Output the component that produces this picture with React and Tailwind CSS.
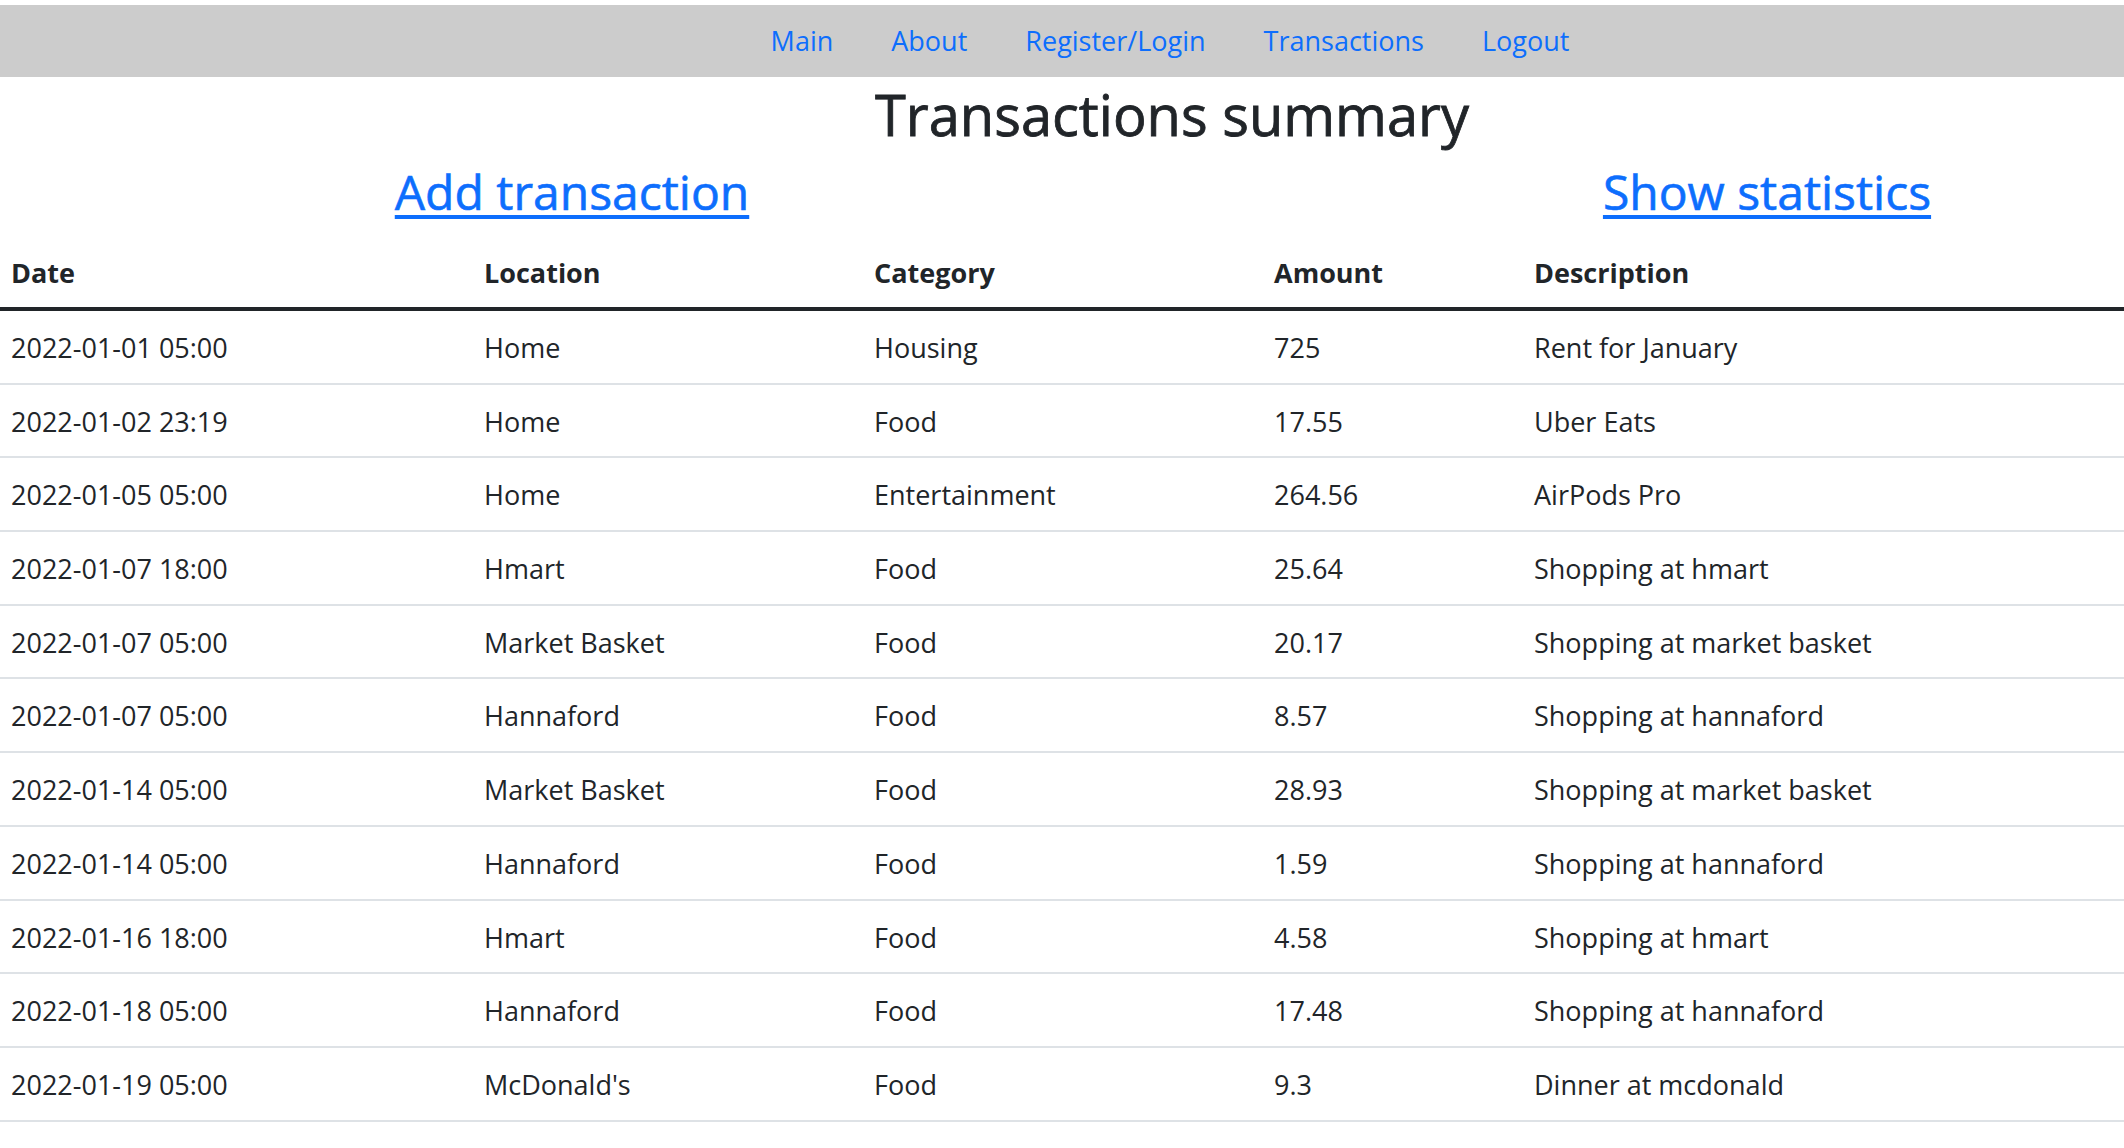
import React from "react";

const rows = [
  ["2022-01-01 05:00", "Home", "Housing", "725", "Rent for January"],
  ["2022-01-02 23:19", "Home", "Food", "17.55", "Uber Eats"],
  ["2022-01-05 05:00", "Home", "Entertainment", "264.56", "AirPods Pro"],
  ["2022-01-07 18:00", "Hmart", "Food", "25.64", "Shopping at hmart"],
  ["2022-01-07 05:00", "Market Basket", "Food", "20.17", "Shopping at market basket"],
  ["2022-01-07 05:00", "Hannaford", "Food", "8.57", "Shopping at hannaford"],
  ["2022-01-14 05:00", "Market Basket", "Food", "28.93", "Shopping at market basket"],
  ["2022-01-14 05:00", "Hannaford", "Food", "1.59", "Shopping at hannaford"],
  ["2022-01-16 18:00", "Hmart", "Food", "4.58", "Shopping at hmart"],
  ["2022-01-18 05:00", "Hannaford", "Food", "17.48", "Shopping at hannaford"],
  ["2022-01-19 05:00", "McDonald's", "Food", "9.3", "Dinner at mcdonald"],
];

const navLinks = ["Main", "About", "Register/Login", "Transactions", "Logout"];

export default function App() {
  return (
    <div className="w-[2124px] min-h-[1148px] bg-white pt-[5px] text-[#212529] font-['Open_Sans',sans-serif] overflow-hidden">
      <nav className="h-[72px] bg-[#cccccc] flex items-center justify-center pl-[216px]">
        {navLinks.map((l) => (
          <a key={l} href="#" className="px-[29px] text-[27px] leading-[40px] text-[#0d6efd] font-normal">
            {l}
          </a>
        ))}
      </nav>
      <h1 className="mt-[1px] mb-[8px] text-center pl-[220px] text-[56px] leading-[73px] font-medium [-webkit-text-stroke:0.8px_#212529]">
        Transactions summary
      </h1>
      <div className="flex h-[77px] items-start">
        <div className="w-[1144px] text-center">
          <a href="#" className="text-[48px] leading-[65px] text-[#0d6efd] font-medium underline decoration-[4px] underline-offset-[5px] [-webkit-text-stroke:0.6px_#0d6efd]">
            Add transaction
          </a>
        </div>
        <div className="w-[714px] ml-[266px] text-center">
          <a href="#" className="text-[48px] leading-[65px] text-[#0d6efd] font-medium underline decoration-[4px] underline-offset-[5px] [-webkit-text-stroke:0.6px_#0d6efd]">
            Show statistics
          </a>
        </div>
      </div>
      <table className="w-full table-fixed border-collapse text-[27px]">
        <colgroup>
          <col className="w-[473px]" />
          <col className="w-[390px]" />
          <col className="w-[400px]" />
          <col className="w-[260px]" />
          <col />
        </colgroup>
        <thead>
          <tr className="border-b-4 border-[#212529]">
            {["Date", "Location", "Category", "Amount", "Description"].map((h) => (
              <th key={h} className="text-left font-bold px-[11px] pt-[17px] pb-[15px] leading-[39px]">
                {h}
              </th>
            ))}
          </tr>
        </thead>
        <tbody>
          {rows.map((r, i) => (
            <tr key={i} className="border-b-2 border-[#dee2e6]">
              {r.map((c, j) => (
                <td key={j} className="px-[11px] pt-[17px] pb-[15.7px] leading-[39px] whitespace-nowrap">
                  {c}
                </td>
              ))}
            </tr>
          ))}
        </tbody>
      </table>
    </div>
  );
}
